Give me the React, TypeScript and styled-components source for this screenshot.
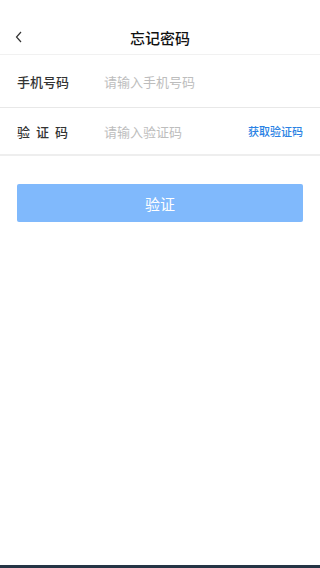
import styled, { createGlobalStyle } from 'styled-components';

const GlobalStyle = createGlobalStyle`
    html, body {
        margin: 0;
        padding: 0;
        background: #ffffff;
        font-family: "Noto Sans CJK SC", "Noto Sans", sans-serif;
    }
    #root {
        min-height: 100vh;
    }
`;

const Page = styled.div`
    display: flex;
    flex-direction: column;
    min-height: 100vh;
    background: #fff;
`;

const Header = styled.div`
    position: relative;
    display: flex;
    align-items: center;
    justify-content: center;
    height: 55px;
    padding-top: 20px;
    box-sizing: border-box;
    border-bottom: 1px solid #f1f1f1;
`;

const Back = styled.div`
    position: absolute;
    left: 14px;
    top: 30px;
    width: 10px;
    height: 14px;
    display: flex;
`;

const Title = styled.div`
    font-size: 15px;
    font-weight: 500;
    color: #111;
    line-height: 1;
`;

const Row = styled.div<{ $height: number; $thick?: boolean }>`
    display: flex;
    align-items: center;
    height: ${p => p.$height}px;
    padding: 0 17px;
    box-sizing: border-box;
    border-bottom: ${p => (p.$thick ? '2px solid #eeeeee' : '1px solid #e8e8e8')};
`;

const Label = styled.div<{ $spaced?: boolean }>`
    width: 87px;
    flex-shrink: 0;
    font-size: 13px;
    font-weight: 500;
    color: #333;
    letter-spacing: ${p => (p.$spaced ? '6px' : '0')};
`;

const Input = styled.input`
    flex: 1;
    min-width: 0;
    border: none;
    outline: none;
    padding: 0;
    font-family: inherit;
    font-size: 13px;
    color: #333;
    background: transparent;

    &::placeholder {
        color: #bdbdbd;
    }
`;

const CodeLink = styled.span`
    font-size: 11px;
    font-weight: 500;
    color: #2a82e4;
    white-space: nowrap;
`;

const Submit = styled.button`
    margin: 28px 17px 0;
    height: 38px;
    border: none;
    border-radius: 2px;
    background: #80b9fc;
    color: #fff;
    font-family: inherit;
    font-size: 15px;
`;

const BottomBar = styled.div`
    margin-top: auto;
    height: 3px;
    background: #253445;
`;

export default function App() {
    return (
        <Page>
            <GlobalStyle />
            <Header>
                <Back>
                    <svg width="10" height="14" viewBox="0 0 10 14">
                        <path d="M7 2 L2.5 7 L7 12" fill="none" stroke="#333" strokeWidth="1.2" />
                    </svg>
                </Back>
                <Title>忘记密码</Title>
            </Header>
            <Row $height={53}>
                <Label>手机号码</Label>
                <Input placeholder='请输入手机号码' />
            </Row>
            <Row $height={48} $thick>
                <Label $spaced>验证码</Label>
                <Input placeholder='请输入验证码' />
                <CodeLink>获取验证码</CodeLink>
            </Row>
            <Submit>验证</Submit>
            <BottomBar />
        </Page>
    );
}
